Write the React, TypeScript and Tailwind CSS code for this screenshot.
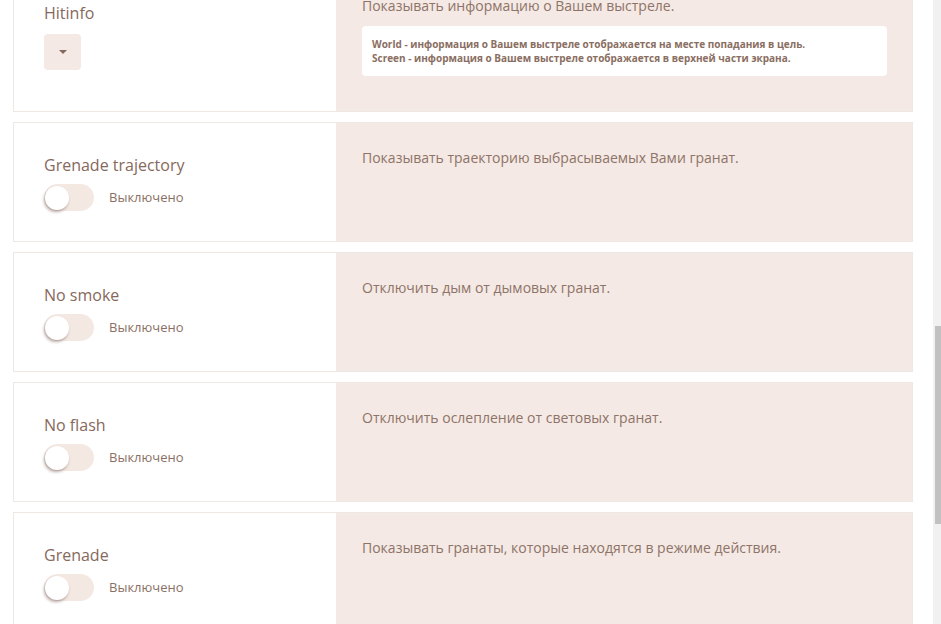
import React from 'react';

type Setting = {
  title: string;
  description: string;
};

const toggles: Setting[] = [
  { title: 'Grenade trajectory', description: 'Показывать траекторию выбрасываемых Вами гранат.' },
  { title: 'No smoke', description: 'Отключить дым от дымовых гранат.' },
  { title: 'No flash', description: 'Отключить ослепление от световых гранат.' },
  { title: 'Grenade', description: 'Показывать гранаты, которые находятся в режиме действия.' },
];

function Toggle() {
  return (
    <div className="flex items-center gap-[15px] mt-[8px]">
      <div className="w-[50px] h-[27px] rounded-full bg-[#f4e8e3] flex items-center pl-px">
        <div className="w-[24px] h-[24px] rounded-full bg-white shadow-[-1px_2px_3px_rgba(80,50,40,0.4)]" />
      </div>
      <span className="text-[13px] text-[#8a7064]">Выключено</span>
    </div>
  );
}

function Card({ left, right, first }: { left: React.ReactNode; right: React.ReactNode; first?: boolean }) {
  return (
    <div className={`flex border border-[#efe7e2] ${first ? 'min-h-[142px]' : 'h-[120px]'}`}>
      <div className="w-[322px] bg-white pl-[30px] pt-[31px]">{left}</div>
      <div className="flex-1 bg-[#f4e9e4] pl-[26px] pr-[25px] pt-[25px]">{right}</div>
    </div>
  );
}

export default function App() {
  return (
    <div className="flex h-[624px] overflow-hidden bg-white" style={{ fontFamily: '"Open Sans", "Noto Sans", sans-serif' }}>
      <div className="flex-1 pl-[13px] pr-[20px]">
        <div className="mt-[-30px] flex flex-col gap-[10px]">
          <Card
            first
            left={
              <>
                <div className="text-[16px] leading-[22px] text-[#86695c]">Hitinfo</div>
                <button className="mt-[10px] w-[37px] h-[36px] rounded-[4px] bg-[#f4e9e4] flex items-center justify-center">
                  <span className="block w-0 h-0 border-l-[4px] border-r-[4px] border-t-[4px] border-l-transparent border-r-transparent border-t-[#86695c]" />
                </button>
              </>
            }
            right={
              <>
                <p className="text-[14px] leading-[20px] text-[#8e7368]">Показывать информацию о Вашем выстреле.</p>
                <div className="mt-[10px] bg-white rounded-[4px] px-[10px] py-[11px] text-[10px] leading-[14px] font-bold text-[#8a6e62]">
                  <div>World - информация о Вашем выстреле отображается на месте попадания в цель.</div>
                  <div>Screen - информация о Вашем выстреле отображается в верхней части экрана.</div>
                </div>
              </>
            }
          />
          {toggles.map((t) => (
            <Card
              key={t.title}
              left={
                <>
                  <div className="text-[16px] leading-[22px] text-[#86695c]">{t.title}</div>
                  <Toggle />
                </>
              }
              right={<p className="text-[14px] leading-[20px] text-[#8e7368]">{t.description}</p>}
            />
          ))}
        </div>
      </div>
      <div className="w-[8px] bg-[#f1f1f1] pl-[2px]">
        <div className="mt-[326px] h-[198px] bg-[#c1c1c1]" />
      </div>
    </div>
  );
}
